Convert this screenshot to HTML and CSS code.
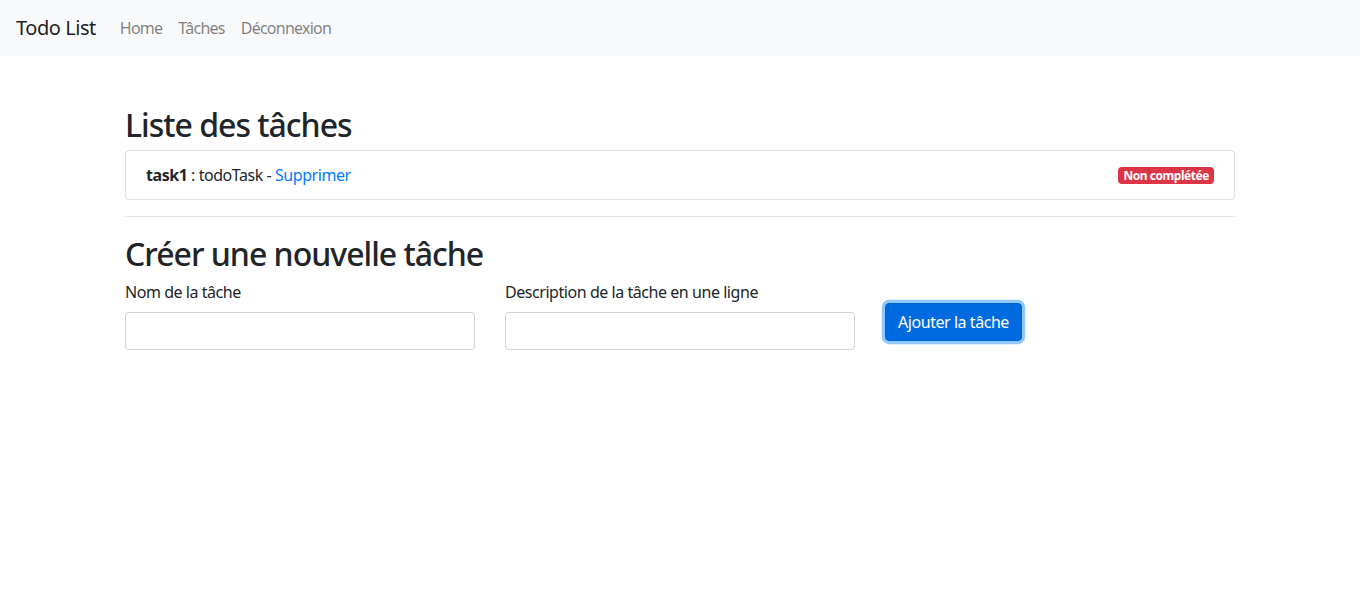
FILE: index.html
```html
<!DOCTYPE html>
<html lang="fr">
<head>
<meta charset="utf-8">
<title>Todo List</title>
<link rel="stylesheet" href="styles.css">
</head>
<body>
<nav class="navbar">
  <a class="brand" href="#">Todo List</a>
  <ul class="nav">
    <li><a class="nav-link" href="#">Home</a></li>
    <li><a class="nav-link" href="#">Tâches</a></li>
    <li><a class="nav-link" href="#">Déconnexion</a></li>
  </ul>
</nav>
<main class="container">
  <h2 class="title">Liste des tâches</h2>
  <ul class="list-group">
    <li class="list-item">
      <span><strong>task1</strong> : todoTask - <a class="link" href="#">Supprimer</a></span>
      <span class="badge">Non complétée</span>
    </li>
  </ul>
  <hr class="sep">
  <h2 class="title-2">Créer une nouvelle tâche</h2>
  <form class="row">
    <div class="col">
      <label class="label">Nom de la tâche</label>
      <input class="input" type="text">
    </div>
    <div class="col">
      <label class="label">Description de la tâche en une ligne</label>
      <input class="input" type="text">
    </div>
    <div class="col">
      <button class="btn" type="button">Ajouter la tâche</button>
    </div>
  </form>
</main>
</body>
</html>
```
FILE: styles.css
```css
* { box-sizing: border-box; }
html, body {
  margin: 0;
  font-family: "Noto Sans", "Open Sans", sans-serif;
  font-size: 16px;
  line-height: 1.5;
  letter-spacing: -0.028em;
  color: #212529;
  background: #fff;
}
.navbar {
  display: flex;
  align-items: center;
  height: 56px;
  padding: 0 16px;
  background: #f8f9fa;
}
.brand {
  font-size: 20px;
  line-height: 30px;
  color: rgba(0,0,0,.9);
  text-decoration: none;
  margin-right: 16px;
  padding: 5px 0;
}
.nav {
  display: flex;
  list-style: none;
  margin: 0;
  padding: 0;
}
.nav-link {
  display: block;
  padding: 8px;
  letter-spacing: -0.75px;
  color: rgba(0,0,0,.5);
  text-decoration: none;
}
.container {
  width: 1140px;
  margin: 0 auto;
  padding: 0 15px;
}
.title, .title-2 {
  font-size: 32px;
  font-weight: 500;
  line-height: 1.2;
  letter-spacing: -1px;
  margin: 0 0 8px;
  padding-top: 2px;
  height: 38.4px;
}
.title { margin-top: 48px; }
.list-group {
  list-style: none;
  margin: 0;
  padding: 0;
}
.list-item {
  display: flex;
  justify-content: space-between;
  align-items: center;
  padding: 12px 20px;
  border: 1px solid rgba(0,0,0,.125);
  border-radius: 4px;
}
.list-item strong { font-weight: 700; }
.link { color: #007bff; text-decoration: none; }
.badge {
  display: inline-block;
  font-size: 12px;
  font-weight: 700;
  line-height: 1;
  padding: 3px 5px 2px;
  border-radius: 4px;
  color: #fff;
  background: #dc3545;
}
.sep {
  margin: 16px 0;
  border: 0;
  border-top: 1px solid rgba(0,0,0,.1);
}
.row {
  display: flex;
  margin: 0 -15px;
}
.col {
  width: 380px;
  padding: 0 15px;
  margin-bottom: 16px;
}
.label {
  display: block;
  margin-bottom: 8px;
}
.input {
  display: block;
  width: 100%;
  height: 38px;
  padding: 6px 12px;
  font: inherit;
  border: 1px solid #ced4da;
  border-radius: 4px;
  background: #fff;
}
.btn {
  margin-top: 23px;
  height: 38px;
  padding: 6px 12px;
  font: inherit;
  letter-spacing: inherit;
  color: #fff;
  background: #006ae0;
  border: 1px solid #0062cc;
  border-radius: 4px;
  box-shadow: 0 0 0 3.2px rgba(38,143,255,.5);
}
```
